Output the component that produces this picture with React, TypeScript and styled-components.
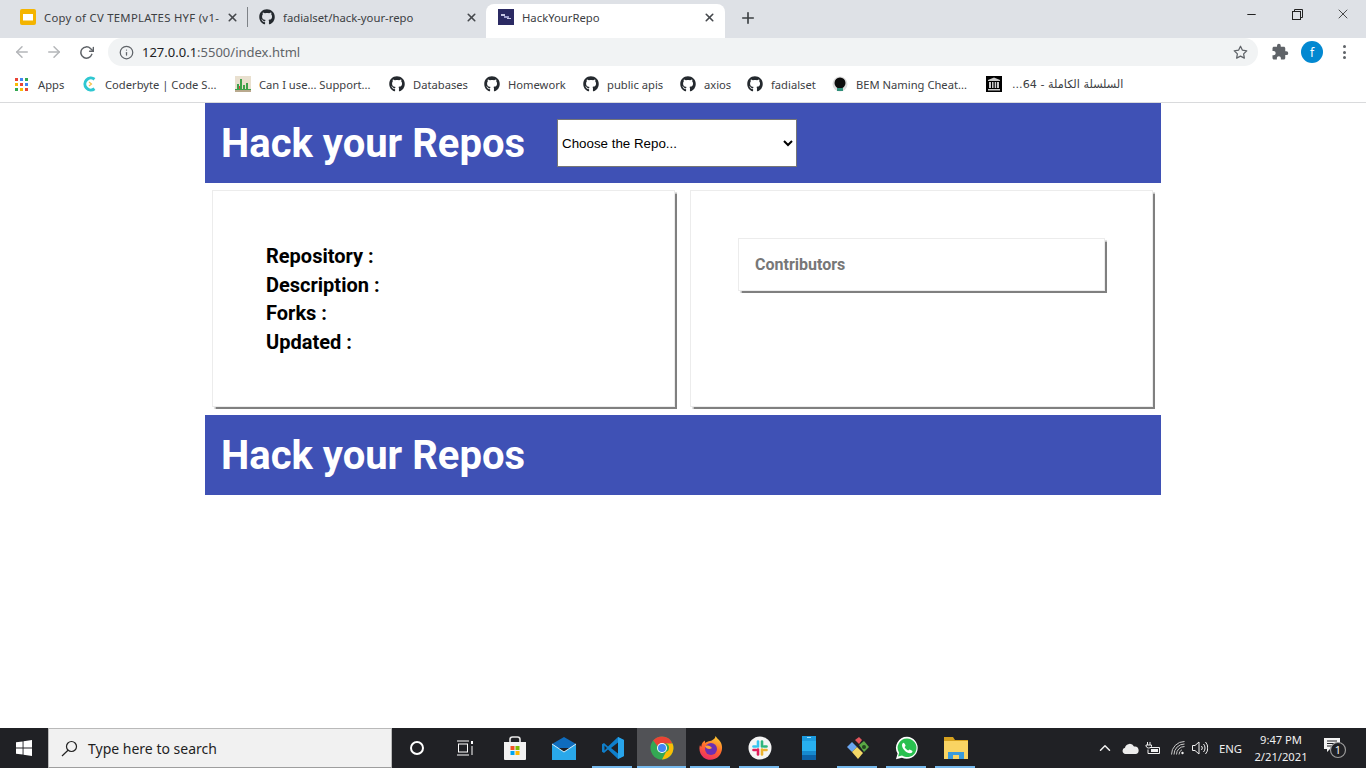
import React from "react";
import styled, { createGlobalStyle } from "styled-components";
import { FaGithub } from "react-icons/fa";
import { MdExtension } from "react-icons/md";
import { FiArrowLeft, FiArrowRight, FiRotateCw, FiInfo, FiStar, FiPlus, FiX, FiMinus, FiChevronUp } from "react-icons/fi";

const GlobalStyle = createGlobalStyle`
  html, body {
    margin: 0;
    padding: 0;
    background: #fff;
    overflow: hidden;
  }
  * { box-sizing: border-box; }
`;

const uiFont = `"Noto Sans", "Open Sans", "DejaVu Sans", sans-serif`;

const Screen = styled.div`
  width: 1366px;
  height: 768px;
  display: flex;
  flex-direction: column;
  font-family: ${uiFont};
`;

/* browser chrome */
const TabStrip = styled.div`
  height: 38px;
  background: #dee1e6;
  display: flex;
  align-items: flex-end;
  padding-left: 10px;
  flex-shrink: 0;
`;
const Tab = styled.div<{ $active?: boolean; $w: number }>`
  width: ${(p) => p.$w}px;
  height: 34px;
  margin-left: ${(p) => (p.$active ? 4 : 0)}px;
  display: flex;
  align-items: center;
  padding: 0 ${(p) => (p.$active ? 9 : 4)}px 8px ${(p) => (p.$active ? 12 : 10)}px;
  border-radius: 8px 8px 0 0;
  background: ${(p) => (p.$active ? "#fff" : "transparent")};
  color: #3c4043;
  font-size: 11.3px;
`;
const TabTitle = styled.span<{ $spread?: number }>`
  flex: 1;
  margin-left: 8px;
  letter-spacing: ${(p) => p.$spread ?? 0}px;
  white-space: nowrap;
  overflow: hidden;
`;
const TabDivider = styled.div`
  width: 1px;
  height: 20px;
  background: #7e8287;
  margin: 0 1px 11px 4px;
`;
const NewTab = styled.div`
  margin: 0 0 11px 14px;
  height: 18px;
  display: flex;
  color: #3c4043;
`;
const WindowButtons = styled.div`
  margin-left: auto;
  align-self: flex-start;
  display: flex;
  height: 28px;
  align-items: center;
  color: #222;
`;
const WindowButton = styled.div`
  width: 46px;
  display: flex;
  justify-content: center;
`;

const Toolbar = styled.div`
  height: 28px;
  padding-left: 6px;
  display: flex;
  align-items: center;
  background: #fff;
  flex-shrink: 0;
`;
const NavButton = styled.div<{ $dim?: boolean }>`
  width: 32px;
  display: flex;
  justify-content: center;
  color: ${(p) => (p.$dim ? "#b4b6b9" : "#5f6368")};
`;
const Omnibox = styled.div`
  width: 1150px;
  height: 28px;
  margin-left: 6px;
  border-radius: 14px;
  background: #f1f3f4;
  display: flex;
  align-items: center;
  padding: 0 10px 0 11px;
  color: #5f6368;
`;
const Url = styled.span`
  margin-left: 8px;
  flex: 1;
  font-size: 13px;
  color: #5f6368;
  b {
    color: #202124;
    font-weight: 400;
  }
`;
const ToolbarActions = styled.div`
  display: flex;
  align-items: center;
  margin-left: 13px;
  color: #5f6368;
  gap: 12px;
`;
const Avatar = styled.div`
  width: 22px;
  height: 22px;
  border-radius: 50%;
  background: #0288d1;
  color: #fff;
  font-size: 12px;
  display: flex;
  align-items: center;
  justify-content: center;
`;
const Kebab = styled.div`
  display: flex;
  flex-direction: column;
  gap: 2.5px;
  margin-left: 8px;
  span {
    width: 3px;
    height: 3px;
    border-radius: 50%;
    background: #5f6368;
  }
`;

const Bookmarks = styled.div`
  height: 37px;
  padding: 0 0 0 15px;
  background: #fff;
  display: flex;
  align-items: center;
  border-bottom: 1px solid #d9dadc;
  flex-shrink: 0;
`;
const Bookmark = styled.div<{ $w: number; $gap: number }>`
  width: ${(p) => p.$w}px;
  display: flex;
  align-items: center;
  gap: ${(p) => p.$gap}px;
  font-size: 11.2px;
  color: #3c4043;
  white-space: nowrap;
  svg {
    flex-shrink: 0;
  }
`;
const ArabicLabel = styled.span`
  margin-left: 2px;
  font-size: 11.2px;
  font-family: "DejaVu Sans", "Noto Sans", sans-serif;
`;

/* the page itself */
const Page = styled.main`
  flex: 1;
  background: #fff;
  overflow: hidden;
`;
const Container = styled.div`
  width: 956px;
  margin: 0 auto;
  font-family: Roboto, "Liberation Sans", sans-serif;
`;
const Banner = styled.header`
  height: 80px;
  background: #3f51b5;
  display: flex;
  align-items: center;
  padding-left: 16px;
`;
const Title = styled.h1`
  margin: 2px 0 0;
  color: #fff;
  font-size: 40px;
  font-weight: 700;
  line-height: 1;
`;
const RepoSelect = styled.select`
  width: 240px;
  height: 48px;
  margin-left: 32px;
  padding: 0;
  background: #fff;
  color: #000;
  border: 1px solid #767676;
  border-radius: 0;
  font-family: "Liberation Sans", Arial, sans-serif;
  font-size: 13.33px;
`;
const Cards = styled.div`
  display: grid;
  grid-template-columns: 463px 463px;
  column-gap: 15px;
  padding: 7px 0 0 7px;
  height: 232px;
`;
const Card = styled.section`
  height: 217px;
  background: #fff;
  border: 1px solid #ececec;
  box-shadow: 1.5px 1.5px 1px #808080;
`;
const InfoCard = styled(Card)`
  padding: 51px 0 0 53px;
`;
const InfoLine = styled.div`
  font-size: 20px;
  line-height: 28.6px;
  font-weight: 700;
  color: #000;
`;
const ContributorsCard = styled(Card)`
  padding: 47px 0 0 47px;
`;
const ContributorsBox = styled.div`
  width: 367px;
  height: 53px;
  padding-left: 16px;
  display: flex;
  align-items: center;
  border: 1px solid #ececec;
  box-shadow: 1.5px 1.5px 1px #808080;
  font-size: 16px;
  font-weight: 700;
  color: #777;
`;

/* windows taskbar */
const Taskbar = styled.footer`
  height: 40px;
  background: #202125;
  display: flex;
  align-items: stretch;
  flex-shrink: 0;
  color: #fff;
`;
const StartButton = styled.div`
  width: 48px;
  display: flex;
  align-items: center;
  justify-content: center;
`;
const SearchBox = styled.div`
  width: 344px;
  background: #f1f1f1;
  border: 1px solid #b9b9b9;
  border-bottom-color: #9e9e9e;
  display: flex;
  align-items: center;
  padding-left: 12px;
  color: #1f1f1f;
  font-size: 14px;
  font-family: "Noto Sans", sans-serif;
`;
const SearchText = styled.span`
  margin-left: 10px;
`;
const TaskIcon = styled.div<{ $open?: boolean; $active?: boolean }>`
  width: 49px;
  position: relative;
  display: flex;
  align-items: center;
  justify-content: center;
  background: ${(p) => (p.$active ? "#515256" : "transparent")};
  &::after {
    content: "";
    display: ${(p) => (p.$open ? "block" : "none")};
    position: absolute;
    bottom: 0;
    left: ${(p) => (p.$active ? "0" : "4px")};
    right: ${(p) => (p.$active ? "0" : "5px")};
    height: 2px;
    background: #76b9ed;
  }
`;
const TaskIcons = styled.div`
  display: flex;
`;
const Tray = styled.div`
  margin-left: auto;
  display: flex;
  align-items: center;
  color: #f0f0f0;
  font-size: 12px;
  font-family: "Noto Sans", sans-serif;
`;
const TrayIcon = styled.div<{ $w: number }>`
  width: ${(p) => p.$w}px;
  display: flex;
  justify-content: center;
`;
const Lang = styled.span`
  margin-left: 10px;
  width: 27px;
  font-size: 11.3px;
`;
const Clock = styled.div`
  width: 70px;
  text-align: center;
  font-size: 11.2px;
  line-height: 17px;
`;
const Notify = styled.div`
  width: 50px;
  padding-right: 13px;
  display: flex;
  justify-content: center;
`;

const SlidesIcon = () => (
  <svg width="16" height="16" viewBox="0 0 16 16">
    <rect width="16" height="16" rx="2" fill="#f4b400" />
    <rect x="3" y="5" width="10" height="6.5" fill="#fff" />
  </svg>
);
const RepoFavicon = () => (
  <svg width="16" height="16" viewBox="0 0 16 16">
    <rect width="16" height="16" fill="#2b2a63" />
    <rect x="3" y="5" width="4" height="2" fill="#c9c9e6" />
    <rect x="6" y="7" width="5" height="2" fill="#9d9dcc" />
    <rect x="9" y="9" width="4" height="1" fill="#c9c9e6" />
  </svg>
);
const RestoreIcon = () => (
  <svg width="11" height="11" viewBox="0 0 11 11" fill="none" stroke="#222">
    <rect x="0.5" y="2.5" width="8" height="8" />
    <path d="M2.5 2.5V.5h8v8H8.500" />
  </svg>
);
const AppsIcon = () => {
  const colors = ["#ea4335", "#4285f4", "#34a853", "#fbbc05", "#ea4335", "#4285f4", "#34a853", "#fbbc05", "#ea4335"];
  return (
    <svg width="13" height="13" viewBox="0 0 13 13">
      {colors.map((c, i) => (
        <rect key={i} x={(i % 3) * 5} y={Math.floor(i / 3) * 5} width="3" height="3" fill={c} />
      ))}
    </svg>
  );
};
const CoderbyteIcon = () => (
  <svg width="16" height="16" viewBox="0 0 16 16" fill="none">
    <path d="M12.500 3.200A6 6 0 1 0 12.500 12.800" stroke="#2fc7d1" strokeWidth="3" />
    <path d="M7 6l2.500 2L7 10" stroke="#f5c04a" strokeWidth="1.200" />
  </svg>
);
const CanIUseIcon = () => (
  <svg width="16" height="16" viewBox="0 0 16 16">
    <rect width="16" height="16" fill="#e9e0cf" />
    <path d="M0 13h16v1H0zM2 8h2v5H2zM5 3h2v10H5zM8 9h2v4H8zM11 7h2v6h-2z" fill="#3ca14a" />
    <path d="M0 14h16v2H0z" fill="#b9a98e" />
    <path d="M4 10h1v3H4z" fill="#d9463e" />
  </svg>
);
const BemIcon = () => (
  <svg width="16" height="16" viewBox="0 0 16 16">
    <circle cx="8" cy="8" r="7.500" fill="#ddd" />
    <circle cx="8" cy="7" r="5.500" fill="#0c0c0c" />
    <rect x="5" y="12" width="6" height="3" fill="#2f8f7a" />
  </svg>
);
const ArchiveIcon = () => (
  <svg width="16" height="16" viewBox="0 0 16 16">
    <rect width="16" height="16" fill="#000" />
    <path d="M8 1.500L14 4v1H2V4z" fill="#ccc" />
    <path d="M3 6h2v6H3zM6 6h1.500v6H6zM8.700 6h1.500v6H8.700zM11 6h2v6h-2zM2 13h12v1.500H2z" fill="#ccc" />
  </svg>
);
const WinLogo = () => (
  <svg width="16" height="16" viewBox="0 0 16 16" fill="#fff">
    <path d="M0 2.300L6.600 1.400V7.600H0zM7.500 1.300L16 0V7.600H7.500zM0 8.400H6.600V14.600L0 13.700zM7.500 8.400H16V16L7.500 14.700z" />
  </svg>
);
const SearchGlass = () => (
  <svg width="17" height="17" viewBox="0 0 17 17" fill="none" stroke="#222" strokeWidth="1.200">
    <circle cx="10.500" cy="6.500" r="5" />
    <path d="M7 10.200L1 16" />
  </svg>
);
const CortanaIcon = () => (
  <svg width="16" height="16" viewBox="0 0 16 16" fill="none" stroke="#fff" strokeWidth="2">
    <circle cx="8" cy="8" r="6" />
  </svg>
);
const TaskViewIcon = () => (
  <svg width="17" height="16" viewBox="0 0 17 16" fill="none" stroke="#fff" strokeWidth="1">
    <path d="M0 1h12M0 15h12" />
    <rect x="1.500" y="4" width="9" height="8" />
    <path d="M15 1v3" strokeWidth="2" />
    <path d="M15 6v9" />
  </svg>
);
const StoreIcon = () => (
  <svg width="24" height="25" viewBox="0 0 24 25">
    <path d="M7 6V3.500C7 2 8 1 9.500 1h5C16 1 17 2 17 3.500V6" fill="none" stroke="#e8e8e8" strokeWidth="1.600" />
    <path d="M1 6h22v17a1 1 0 0 1-1 1H2a1 1 0 0 1-1-1z" fill="#f2f2f2" />
    <rect x="7.500" y="10" width="4" height="4" fill="#f25022" />
    <rect x="12.500" y="10" width="4" height="4" fill="#7fba00" />
    <rect x="7.500" y="15" width="4" height="4" fill="#00a4ef" />
    <rect x="12.500" y="15" width="4" height="4" fill="#ffb900" />
  </svg>
);
const MailIcon = () => (
  <svg width="24" height="23" viewBox="0 0 24 23">
    <path d="M12 0L24 7v4H0V7z" fill="#0f6cbd" />
    <path d="M0 7l12 8 12-8v16H0z" fill="#29a8ea" />
    <path d="M0 7l12 8 12-8" fill="none" stroke="#d8f0fb" strokeWidth="1" />
  </svg>
);
const VsCodeIcon = () => (
  <svg width="24" height="24" viewBox="0 0 24 24">
    <path d="M17 1l6 3v16l-6 3L7 13.500 3 17l-2-1.200V8.200L3 7l4 3.500z" fill="#0f7fcb" />
    <path d="M17 6.500L10 12l7 5.500zM3.500 9.500v5L6 12z" fill="#202125" />
    <path d="M17 1l6 3v16l-6 3z" fill="#28a4ea" />
  </svg>
);
const ChromeIcon = () => (
  <svg width="24" height="24" viewBox="0 0 24 24">
    <circle cx="12" cy="12" r="11.500" fill="#34a853" />
    <path d="M12 .5A11.500 11.500 0 0 1 22.500 7.500H12a4.500 4.500 0 0 0-4.200 3L3.200 4.600A11.500 11.500 0 0 1 12 .5z" fill="#ea4335" />
    <path d="M22.500 7.500A11.500 11.500 0 0 1 12 23.500l4-7.500a4.500 4.500 0 0 0 0-8.500z" fill="#fbbc05" />
    <circle cx="12" cy="12" r="5" fill="#fff" />
    <circle cx="12" cy="12" r="4" fill="#4285f4" />
  </svg>
);
const FirefoxIcon = () => (
  <svg width="24" height="24" viewBox="0 0 24 24">
    <defs>
      <linearGradient id="fx" x1="0.7" y1="0" x2="0.3" y2="1">
        <stop offset="0" stopColor="#ffcb30" />
        <stop offset="0.5" stopColor="#ff6a2b" />
        <stop offset="1" stopColor="#ef2a68" />
      </linearGradient>
    </defs>
    <path d="M16.500 0c1 2 3 3 5 6 2.500 4 2 10-1.500 14-4 4.500-11 5-15.500 1.500C1 18.500-.5 13.500 1 9c.3 1 .8 1.500 1.300 1.800C2.500 7.500 4 5.500 6 4.500c-.3 1 0 2 .5 2.500C8 5 12 5.500 13.500 4c1.500-1 3-2 3-4z" fill="url(#fx)" />
    <circle cx="12" cy="13" r="6" fill="#6d2fb3" />
    <path d="M6 10c3-1.500 6 .5 7 2-2.500 2-6 1-7-2z" fill="#ffa436" />
  </svg>
);
const SlackIcon = () => (
  <svg width="24" height="24" viewBox="0 0 24 24">
    <circle cx="12" cy="12" r="11.500" fill="#f4f4f4" />
    <g strokeWidth="2.600" strokeLinecap="round">
      <path d="M10 5.500v5" stroke="#36c5f0" />
      <path d="M5.500 10.500H8" stroke="#36c5f0" />
      <path d="M14 5.500v5" stroke="#2eb67d" />
      <path d="M18.500 10.500H16" stroke="#2eb67d" />
      <path d="M14 13.500v5" stroke="#ecb22e" />
      <path d="M18.500 14H16" stroke="#ecb22e" />
      <path d="M10 13.500v5" stroke="#e01e5a" />
      <path d="M5.500 14H8" stroke="#e01e5a" />
    </g>
  </svg>
);
const PhoneIcon = () => (
  <svg width="14" height="24" viewBox="0 0 14 24">
    <rect width="14" height="24" rx="1.500" fill="#28b0f0" />
    <rect width="14" height="5" y="0" fill="#1c9ce0" />
    <rect width="14" height="4" y="15" fill="#1689cf" />
    <rect width="14" height="5" y="19" fill="#0c62a8" />
    <rect x="5" y="1" width="4" height="1" fill="#9be0ff" />
  </svg>
);
const GitKrakenIcon = () => (
  <svg width="24" height="24" viewBox="0 0 24 24">
    <path d="M1 11l5-5 5 5-5 5z" fill="#6aa6f0" />
    <path d="M9 4l4-3 3 3-3 4z" fill="#e2555c" />
    <path d="M13 9l5-4 5 6-5 5z" fill="#5aa845" />
    <path d="M6 16l5-5 6 6-5 6z" fill="#f3d867" />
    <circle cx="18" cy="11" r="2" fill="#24451f" />
  </svg>
);
const WhatsAppIcon = () => (
  <svg width="24" height="24" viewBox="0 0 24 24">
    <path d="M12 .8A11 11 0 0 0 2.600 17.500L1 23.200l5.900-1.500A11 11 0 1 0 12 .8z" fill="#fff" />
    <path d="M12 2.500a9.300 9.300 0 0 0-7.900 14.300l-1 3.700 3.900-1A9.300 9.300 0 1 0 12 2.500z" fill="#29c04f" />
    <path d="M8.500 6.800c-.5 0-1.500 1-1.500 2.500 0 3.500 4.500 8 8 8 1.500 0 2.500-1 2.500-2 0-.5-2.500-1.800-3-1.800-.4 0-.9 1-1.300 1-.8 0-3.500-2.500-3.500-3.400 0-.4.900-.9.900-1.400 0-.4-1.200-2.900-2.100-2.900z" fill="#fff" />
  </svg>
);
const ExplorerIcon = () => (
  <svg width="24" height="22" viewBox="0 0 24 22">
    <path d="M0 0h9l2 3h13v4H0z" fill="#d6a11e" />
    <rect y="4" width="24" height="18" fill="#f9d463" />
    <path d="M4 22v-7h16v7h-5v-4H9v4z" fill="#3a9bdc" />
    <rect x="9" y="18" width="6" height="4" fill="#f9d463" />
  </svg>
);
const CloudIcon = () => (
  <svg width="17" height="11" viewBox="0 0 17 11" fill="#ececec">
    <path d="M3.500 11A3.200 3.200 0 0 1 3 4.700 4.800 4.800 0 0 1 12 3.500a3.800 3.800 0 0 1 1.500 7.500z" />
  </svg>
);
const BatteryIcon = () => (
  <svg width="16" height="12" viewBox="0 0 16 12" fill="none" stroke="#f0f0f0">
    <path d="M2.500 0v3M5 0v3M1 3h5.500v1.500a3 3 0 0 1-3 1.500h-.5a3 3 0 0 1-2-2z" />
    <path d="M5 5.500h9.500v6H3v-4" />
    <rect x="6" y="7" width="7" height="3" fill="#f0f0f0" stroke="none" />
  </svg>
);
const WifiIcon = () => (
  <svg width="14" height="14" viewBox="0 0 14 14" fill="none" stroke="#c9c9c9">
    <path d="M.5 13.500A13 13 0 0 1 13.500.5M3 13.500A10.500 10.500 0 0 1 13.500 3M5.500 13.500a8 8 0 0 1 8-8M8 13.500a5.500 5.500 0 0 1 3-4.800" />
    <circle cx="11.500" cy="12" r="1.200" fill="#f0f0f0" stroke="none" />
  </svg>
);
const VolumeIcon = () => (
  <svg width="16" height="14" viewBox="0 0 16 14" fill="none" stroke="#f0f0f0">
    <path d="M.5 4.500h2.500L7 1v12L3 9.500H.5z" />
    <path d="M9.500 5a3 3 0 0 1 0 4M11.500 3a6 6 0 0 1 0 8M13.500 1a9 9 0 0 1 0 12" />
  </svg>
);
const NotifyIcon = () => (
  <svg width="24" height="22" viewBox="0 0 24 22">
    <path d="M1 1h16v11H7l-3 3v-3H1z" fill="#f4f4f4" />
    <path d="M4 4h10M4 6.500h10M4 9h10" stroke="#202125" />
    <circle cx="15" cy="13" r="7.500" fill="#202125" stroke="#9b9b9b" strokeWidth="1.200" />
    <text x="15" y="17" textAnchor="middle" fontSize="11" fontFamily="Noto Sans, sans-serif" fill="#f4f4f4">1</text>
  </svg>
);

const bookmarks: { label: string; w: number; gap: number; icon: React.ReactNode }[] = [
  { label: "Apps", w: 67, gap: 10, icon: <AppsIcon /> },
  { label: "Coderbyte | Code S...", w: 153, gap: 7, icon: <CoderbyteIcon /> },
  { label: "Can I use... Support...", w: 154, gap: 8, icon: <CanIUseIcon /> },
  { label: "Databases", w: 95, gap: 8, icon: <FaGithub size={16} color="#24292e" /> },
  { label: "Homework", w: 99, gap: 8, icon: <FaGithub size={16} color="#24292e" /> },
  { label: "public apis", w: 97, gap: 8, icon: <FaGithub size={16} color="#24292e" /> },
  { label: "axios", w: 67, gap: 8, icon: <FaGithub size={16} color="#24292e" /> },
  { label: "fadialset", w: 85, gap: 8, icon: <FaGithub size={16} color="#24292e" /> },
  { label: "BEM Naming Cheat...", w: 154, gap: 8, icon: <BemIcon /> },
];

const taskIcons: { icon: React.ReactNode; open?: boolean; active?: boolean }[] = [
  { icon: <CortanaIcon /> },
  { icon: <TaskViewIcon /> },
  { icon: <StoreIcon /> },
  { icon: <MailIcon /> },
  { icon: <VsCodeIcon />, open: true },
  { icon: <ChromeIcon />, open: true, active: true },
  { icon: <FirefoxIcon />, open: true },
  { icon: <SlackIcon />, open: true },
  { icon: <PhoneIcon /> },
  { icon: <GitKrakenIcon />, open: true },
  { icon: <WhatsAppIcon />, open: true },
  { icon: <ExplorerIcon />, open: true },
];

const App = () => {
  return (
    <Screen>
      <GlobalStyle />
      <TabStrip>
        <Tab $w={233}>
          <SlidesIcon />
          <TabTitle $spread={0.3}>Copy of CV TEMPLATES HYF (v1-</TabTitle>
          <FiX size={13} strokeWidth={3} color="#45484c" />
        </Tab>
        <TabDivider />
        <Tab $w={233}>
          <FaGithub size={16} color="#24292e" />
          <TabTitle>fadialset/hack-your-repo</TabTitle>
          <FiX size={13} strokeWidth={3} color="#45484c" />
        </Tab>
        <Tab $active $w={239}>
          <RepoFavicon />
          <TabTitle>HackYourRepo</TabTitle>
          <FiX size={13} strokeWidth={3} color="#45484c" />
        </Tab>
        <NewTab>
          <FiPlus size={18} strokeWidth={2.2} />
        </NewTab>
        <WindowButtons>
          <WindowButton>
            <FiMinus size={13} />
          </WindowButton>
          <WindowButton>
            <RestoreIcon />
          </WindowButton>
          <WindowButton>
            <FiX size={16} strokeWidth={1.2} />
          </WindowButton>
        </WindowButtons>
      </TabStrip>
      <Toolbar>
        <NavButton $dim>
          <FiArrowLeft size={18} />
        </NavButton>
        <NavButton $dim>
          <FiArrowRight size={18} />
        </NavButton>
        <NavButton>
          <FiRotateCw size={15} strokeWidth={2.4} />
        </NavButton>
        <Omnibox>
          <FiInfo size={15} strokeWidth={2} />
          <Url>
            <b>127.0.0.1</b>:5500/index.html
          </Url>
          <FiStar size={15} strokeWidth={2} />
        </Omnibox>
        <ToolbarActions>
          <MdExtension size={18} />
          <Avatar>f</Avatar>
          <Kebab>
            <span />
            <span />
            <span />
          </Kebab>
        </ToolbarActions>
      </Toolbar>
      <Bookmarks>
        {bookmarks.map((b) => (
          <Bookmark key={b.label} $w={b.w} $gap={b.gap}>
            {b.icon}
            {b.label}
          </Bookmark>
        ))}
        <Bookmark $w={160} $gap={8}>
          <ArchiveIcon />
          <ArabicLabel dir="rtl">السلسلة الكاملة - 64...</ArabicLabel>
        </Bookmark>
      </Bookmarks>

      <Page>
        <Container>
          <Banner>
            <Title>Hack your Repos</Title>
            <RepoSelect defaultValue="">
              <option value="">Choose the Repo...</option>
            </RepoSelect>
          </Banner>
          <Cards>
            <InfoCard>
              <InfoLine>Repository :</InfoLine>
              <InfoLine>Description :</InfoLine>
              <InfoLine>Forks :</InfoLine>
              <InfoLine>Updated :</InfoLine>
            </InfoCard>
            <ContributorsCard>
              <ContributorsBox>Contributors</ContributorsBox>
            </ContributorsCard>
          </Cards>
          <Banner as="footer">
            <Title>Hack your Repos</Title>
          </Banner>
        </Container>
      </Page>

      <Taskbar>
        <StartButton>
          <WinLogo />
        </StartButton>
        <SearchBox>
          <SearchGlass />
          <SearchText>Type here to search</SearchText>
        </SearchBox>
        <TaskIcons>
          {taskIcons.map((t, i) => (
            <TaskIcon key={i} $open={t.open} $active={t.active}>
              {t.icon}
            </TaskIcon>
          ))}
        </TaskIcons>
        <Tray>
          <TrayIcon $w={28}>
            <FiChevronUp size={18} />
          </TrayIcon>
          <TrayIcon $w={22}>
            <CloudIcon />
          </TrayIcon>
          <TrayIcon $w={24}>
            <BatteryIcon />
          </TrayIcon>
          <TrayIcon $w={26}>
            <WifiIcon />
          </TrayIcon>
          <TrayIcon $w={18}>
            <VolumeIcon />
          </TrayIcon>
          <Lang>ENG</Lang>
          <Clock>
            9:47 PM
            <br />
            2/21/2021
          </Clock>
          <Notify>
            <NotifyIcon />
          </Notify>
        </Tray>
      </Taskbar>
    </Screen>
  );
};

export default App;
